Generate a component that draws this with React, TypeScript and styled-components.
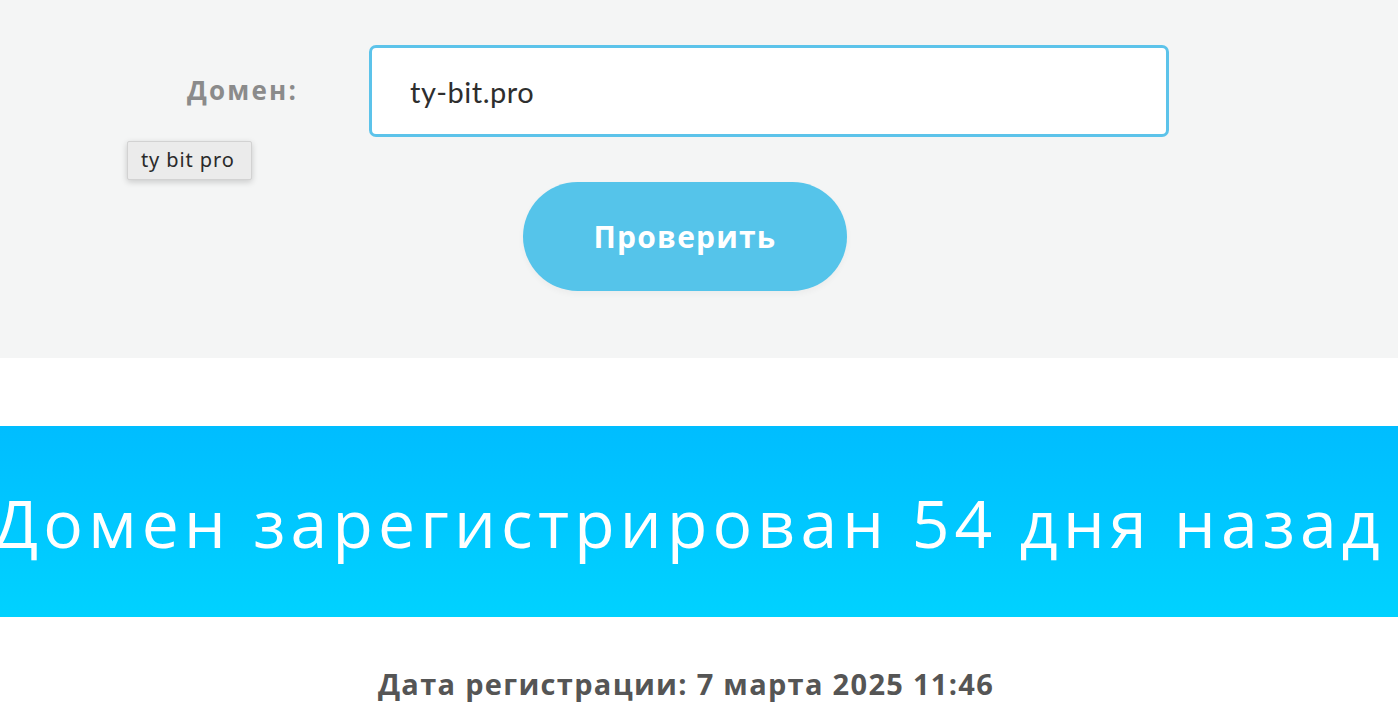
import React from 'react';
import styled, { createGlobalStyle } from 'styled-components';

const GlobalStyle = createGlobalStyle`
  html, body {
    margin: 0;
    padding: 0;
    background: #ffffff;
    overflow: hidden;
  }
  body {
    font-family: "Open Sans", "Noto Sans", "Liberation Sans", sans-serif;
  }
`;

const Page = styled.div`
  width: 1398px;
  height: 722px;
  overflow: hidden;
`;

const CheckSection = styled.section`
  background: #f4f5f5;
  height: 358px;
  padding-top: 45px;
  box-sizing: border-box;
`;

const Form = styled.div`
  width: 1024px;
  margin: 0 auto;
  position: relative;
`;

const Row = styled.div`
  display: flex;
  align-items: center;
`;

const Label = styled.label`
  width: 182px;
  font-family: "Open Sans", "Noto Sans", sans-serif;
  font-weight: 700;
  font-size: 26px;
  letter-spacing: 2.2px;
  color: #8b8b8b;
  margin-bottom: 2px;
`;

const Input = styled.input`
  width: 800px;
  height: 92px;
  box-sizing: border-box;
  border: 3px solid #5cc3ea;
  border-radius: 7px;
  background: #ffffff;
  padding: 0 0 0 38px;
  font-family: "Lato", "Open Sans", sans-serif;
  font-size: 29px;
  letter-spacing: 0.5px;
  color: #2e2e2e;
  outline: none;
`;

const Tooltip = styled.div`
  position: absolute;
  left: -60px;
  top: 96px;
  padding: 6px 16px 7px 13px;
  background: #ebebeb;
  border: 1px solid #d2d2d2;
  border-radius: 2px;
  box-shadow: 0 2px 6px rgba(0, 0, 0, 0.18);
  font-family: "Noto Sans", "Open Sans", sans-serif;
  font-size: 20px;
  letter-spacing: 0.9px;
  line-height: 24px;
  color: #2a2a2a;
`;

const Actions = styled.div`
  padding-left: 336px;
  margin-top: 45px;
`;

const CheckButton = styled.button`
  width: 324px;
  height: 109px;
  border: none;
  border-radius: 55px;
  background: #55c4ea;
  color: #ffffff;
  font-family: "Open Sans", "Noto Sans", sans-serif;
  font-weight: 700;
  font-size: 30px;
  letter-spacing: 1.2px;
  cursor: pointer;
  box-shadow: 0 3px 6px rgba(0, 0, 0, 0.04);
`;

const Spacer = styled.div`
  height: 68px;
`;

const Banner = styled.section`
  height: 191px;
  background: linear-gradient(180deg, #00bdff 0%, #00d2ff 100%);
  display: flex;
  align-items: center;
  justify-content: center;
  overflow: hidden;
`;

const BannerText = styled.h1`
  margin: 0 0 0 -20px;
  white-space: nowrap;
  font-family: "Open Sans", "Noto Sans", sans-serif;
  font-weight: 400;
  font-size: 66px;
  letter-spacing: 5.2px;
  color: #ffffff;
`;

const Details = styled.section`
  padding-top: 47px;
  text-align: center;
`;

const DateLine = styled.p`
  margin: 0 0 0 -26px;
  font-family: "Open Sans", "Noto Sans", sans-serif;
  font-weight: 700;
  font-size: 29px;
  letter-spacing: 1.3px;
  color: #555555;
`;

export default function App() {
  return (
    <Page>
      <GlobalStyle />
      <CheckSection>
        <Form>
          <Row>
            <Label>Домен:</Label>
            <Input defaultValue="ty-bit.pro" />
          </Row>
          <Tooltip>ty bit pro</Tooltip>
          <Actions>
            <CheckButton>Проверить</CheckButton>
          </Actions>
        </Form>
      </CheckSection>
      <Spacer />
      <Banner>
        <BannerText>Домен зарегистрирован 54 дня назад</BannerText>
      </Banner>
      <Details>
        <DateLine>Дата регистрации: 7 марта 2025 11:46</DateLine>
      </Details>
    </Page>
  );
}
